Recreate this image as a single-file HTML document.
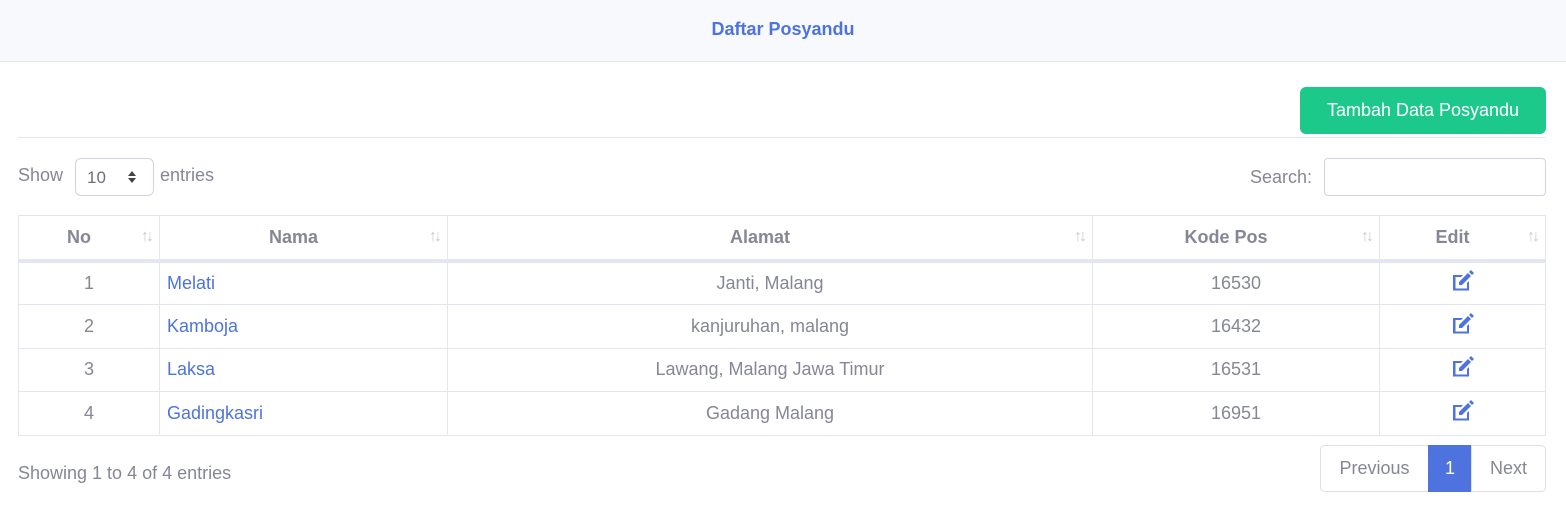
<!DOCTYPE html>
<html><head><style>
*{box-sizing:border-box;margin:0;padding:0}
body{width:1566px;height:517px;background:#fff;font-family:"Liberation Sans",sans-serif;color:#858796;font-size:18px;position:relative;overflow:hidden}
.a{position:absolute}
.hdr{left:0;top:0;width:1566px;height:62px;background:#f8f9fc;border-bottom:1px solid #e3e6f0;text-align:center;line-height:58px;color:#4e73df;font-weight:bold;font-size:18px}
.btn{left:1300px;top:87px;width:246px;height:47px;background:#1cc88a;color:#fff;border-radius:6px;text-align:center;line-height:46px;font-size:18px}
.hr{left:18px;top:137px;width:1528px;height:1px;background:#e3e6f0}
.sel{left:75px;top:158px;width:79px;height:38px;border:1px solid #d1d3e2;border-radius:6px;padding-left:11px;line-height:38px;color:#6e707e;font-size:17px}
.inp{left:1324px;top:158px;width:222px;height:38px;border:1px solid #d1d3e2;border-radius:4px}
table{position:absolute;left:18px;top:215px;width:1528px;border-collapse:collapse}
td,th{border:1px solid #e3e6f0;text-align:center;position:relative;padding:0}
tr.r{height:43.8px}
th{height:45px;border-bottom:4px solid #e3e6f0;font-weight:bold;color:#858796;font-size:18px;padding-right:20px}
th span{position:absolute;right:8px;top:12px;font-size:16px;color:#c8cad4;font-weight:normal;letter-spacing:-3px}
td.n{text-align:left;padding-left:7px;color:#4e73df}
.pg{top:445px;height:47px;border:1px solid #dddfeb;line-height:45px;text-align:center;color:#858796}
</style></head><body>
<div class="a hdr">Daftar Posyandu</div>
<div class="a btn">Tambah Data Posyandu</div>
<div class="a hr"></div>
<div class="a" style="left:18px;top:165px">Show</div>
<div class="a sel">10</div>
<svg class="a" style="left:127px;top:170px" width="10" height="14" viewBox="0 0 10 14"><path d="M5 1L9 6H1z M5 13L1 8h8z" fill="#444"/></svg>
<div class="a" style="left:160px;top:165px">entries</div>
<div class="a" style="left:1250px;top:167px">Search:</div>
<div class="a inp"></div>
<table>
<tr><th style="width:141px">No<span>↑↓</span></th><th style="width:288px">Nama<span>↑↓</span></th><th style="width:645px">Alamat<span>↑↓</span></th><th style="width:287px">Kode Pos<span>↑↓</span></th><th>Edit<span>↑↓</span></th></tr>
<tr class="r"><td>1</td><td class="n">Melati</td><td>Janti, Malang</td><td>16530</td><td><svg width="24" height="22" viewBox="0 0 24 22"><path d="M2 5h10l-2 2H4.5v11.5h11.5V13l2-2v9.5H2z" fill="#4e73df"/><path d="M8 12l9-9 3 3-9 9H8z M18 2l2-2 3 3-2 2z" fill="#4e73df"/></svg></td></tr>
<tr class="r"><td>2</td><td class="n">Kamboja</td><td>kanjuruhan, malang</td><td>16432</td><td><svg width="24" height="22" viewBox="0 0 24 22"><path d="M2 5h10l-2 2H4.5v11.5h11.5V13l2-2v9.5H2z" fill="#4e73df"/><path d="M8 12l9-9 3 3-9 9H8z M18 2l2-2 3 3-2 2z" fill="#4e73df"/></svg></td></tr>
<tr class="r"><td>3</td><td class="n">Laksa</td><td>Lawang, Malang Jawa Timur</td><td>16531</td><td><svg width="24" height="22" viewBox="0 0 24 22"><path d="M2 5h10l-2 2H4.5v11.5h11.5V13l2-2v9.5H2z" fill="#4e73df"/><path d="M8 12l9-9 3 3-9 9H8z M18 2l2-2 3 3-2 2z" fill="#4e73df"/></svg></td></tr>
<tr class="r"><td>4</td><td class="n">Gadingkasri</td><td>Gadang Malang</td><td>16951</td><td><svg width="24" height="22" viewBox="0 0 24 22"><path d="M2 5h10l-2 2H4.5v11.5h11.5V13l2-2v9.5H2z" fill="#4e73df"/><path d="M8 12l9-9 3 3-9 9H8z M18 2l2-2 3 3-2 2z" fill="#4e73df"/></svg></td></tr>
</table>
<div class="a" style="left:18px;top:463px">Showing 1 to 4 of 4 entries</div>
<div class="a pg" style="left:1320px;width:109px;border-radius:5px 0 0 5px">Previous</div>
<div class="a pg" style="left:1428px;width:44px;background:#4e73df;border-color:#4e73df;color:#fff">1</div>
<div class="a pg" style="left:1471px;width:75px;border-radius:0 5px 5px 0">Next</div>
</body></html>
